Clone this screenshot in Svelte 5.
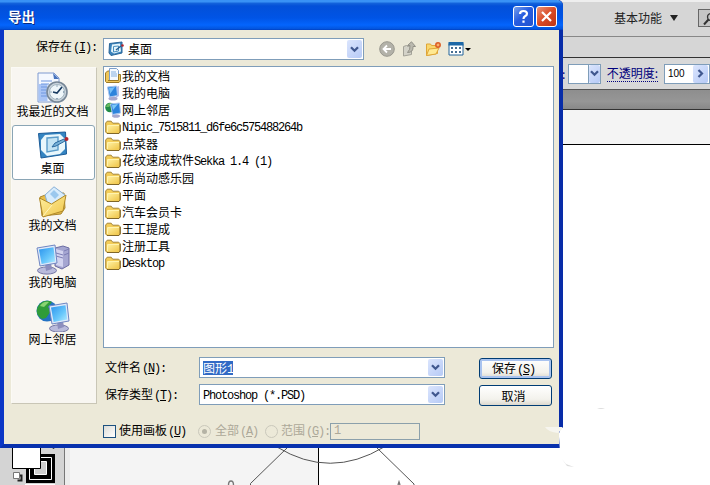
<script lang="ts">
	const places = [
		{ label: '我最近的文档', icon: 'recent' },
		{ label: '桌面', icon: 'desktop' },
		{ label: '我的文档', icon: 'documents' },
		{ label: '我的电脑', icon: 'computer' },
		{ label: '网上邻居', icon: 'network' }
	];

	const files = [
		{ name: '我的文档', icon: 'docs-small' },
		{ name: '我的电脑', icon: 'pc-small' },
		{ name: '网上邻居', icon: 'net-small' },
		{ name: 'Nipic_7515811_d6fe6c575488264b', icon: 'folder' },
		{ name: '点菜器', icon: 'folder' },
		{ name: '花纹速成软件Sekka 1.4 (1)', icon: 'folder' },
		{ name: '乐尚动感乐园', icon: 'folder' },
		{ name: '平面', icon: 'folder' },
		{ name: '汽车会员卡', icon: 'folder' },
		{ name: '王工提成', icon: 'folder' },
		{ name: '注册工具', icon: 'folder' },
		{ name: 'Desktop', icon: 'folder' }
	];

	let selected = $state('desktop');

	// latin runs get the half-width face, everything else stays full width
	function runs(text: string) {
		return text.split(/([\x20-\x7e]+)/).filter(Boolean);
	}

	function isLatin(run: string) {
		return /^[\x20-\x7e]/.test(run);
	}
</script>

{#snippet mixed(text: string)}
	{#each runs(text) as run}<span class:latin={isLatin(run)}>{run}</span>{/each}
{/snippet}

{#snippet hotkey(text: string, key: string, tail: string)}
	<span>{text}</span><span class="latin key">(<u>{key}</u>){tail}</span>
{/snippet}

{#snippet chevron()}
	<span class="drop">
		<svg width="9" height="7" viewBox="0 0 9 7"><path d="M1 1.2L4.5 4.7L8 1.2" fill="none" stroke="#40588f" stroke-width="2.3" /></svg>
	</span>
{/snippet}

{#snippet monitor()}
	<ellipse cx="11" cy="27.5" rx="9.5" ry="3.6" fill="#b9bbdc" stroke="#7375a5" />
	<path d="M9 21l6-1 1 6-6 2z" fill="#8c8ebd" />
	<path d="M1 5L19 2L21 20L4 23Z" fill="#dfe9fa" stroke="#6f86c2" />
	<path d="M3 6.5L17.5 4.2L19.2 18.6L5.6 21Z" fill="url(#screen)" />
{/snippet}

{#snippet icon(kind: string)}
	{#if kind === 'recent'}
		<svg width="32" height="32" viewBox="0 0 32 32">
			<path d="M1 1h16l5 5v24H1z" fill="#f4f8ff" stroke="#7f9ad0" />
			<path d="M1.5 12h9v17h-9z" fill="#a9c4f5" />
			<path d="M16 1l6 6h-5z" fill="#4773bd" />
			<path d="M4 9h11M4 12h8M4 15h6M4 18h5M4 21h5M4 24h7" stroke="#6e97df" />
			<circle cx="20" cy="20" r="10" fill="#c9d3dc" stroke="#778797" stroke-width="1.6" />
			<circle cx="20" cy="20" r="7.5" fill="#eef6fa" stroke="#a3b5c1" />
			<path d="M25 15l-5 6-4-1" fill="none" stroke="#173a61" stroke-width="1.6" />
			<path d="M20 13.5v1M20 26v1M13.5 20h1M26 20h1" stroke="#426381" />
		</svg>
	{:else if kind === 'desktop'}
		<svg width="32" height="32" viewBox="0 0 32 32">
			<path d="M1.500 4.500L28.500 3l1 22L4 29z" fill="#3585c2" stroke="#1c5c98" />
			<path d="M8 6l15-1 5 5v10l-5 5-13 2-6-6V11z" fill="#e9f7fc" />
			<path d="M10 9l11-1v13l-11 2z" fill="#c4e4f4" stroke="#5b9cc9" stroke-width="1.4" />
			<path d="M15 18l3-4 9-4 1 2-9 5z" fill="#78b2d8" stroke="#2c6a9f" />
			<circle cx="29.500" cy="10" r="2" fill="#b5242c" />
		</svg>
	{:else if kind === 'documents'}
		<svg width="32" height="32" viewBox="0 0 32 32">
			<path d="M3 11l8-3 16-1 1 15-4 6-19 2z" fill="#e9bd48" stroke="#a9862f" />
			<path d="M8 9L17 .8l11 8.200-5 11-12-1z" fill="#d8ecfc" stroke="#87afd6" />
			<path d="M13 8l4-4 5 5-4 4z" fill="#9bc8ee" />
			<path d="M2.500 12l12 6L29 9l-3 16-20 6z" fill="url(#folder)" stroke="#b18a2a" />
			<path d="M6 30l9-11" stroke="#fff6bd" />
		</svg>
	{:else if kind === 'computer'}
		<svg width="34" height="32" viewBox="0 0 34 32">
			<path d="M19 5l8-2 6 2v17l-7 4-7-3z" fill="#a5a6d1" stroke="#6c6da3" />
			<path d="M20 6l7 2v16l-7-2z" fill="#d2d3ef" />
			<path d="M20 10l7 2M20 13l7 2M28 8l5-2M28 12l5-2" stroke="#7c7db5" />
			{@render monitor()}
		</svg>
	{:else if kind === 'network'}
		<svg width="34" height="32" viewBox="0 0 34 32">
			<circle cx="11" cy="11" r="10.5" fill="#2372c4" />
			<path d="M1 9C3 2 10-1 16 2l-4 5 3 4-5 7-4 1C2 17 0 13 1 9z" fill="#2f9c3a" />
			<path d="M4 6c2-4 6-5 9-4l-5 5z" fill="#89d472" />
			<g transform="translate(12 1)">{@render monitor()}</g>
		</svg>
	{:else if kind === 'desk-small'}
		<svg width="16" height="16" viewBox="0 0 16 16">
			<path d="M1.500 2.500L14 1v11L3 14.500 1 12z" fill="#3a83bd" stroke="#2a6597" />
			<path d="M4 3.500l8-1 1 8-7 2-3-2z" fill="#e6f5fb" />
			<path d="M5.500 5.500l5-.5v5l-5 1z" fill="none" stroke="#4a8fbf" />
			<path d="M8 9l5-4" stroke="#245d90" stroke-width="1.500" />
			<circle cx="14.500" cy="4.500" r="1.300" fill="#b5242c" />
		</svg>
	{:else if kind === 'docs-small'}
		<svg width="16" height="16" viewBox="0 0 16 16">
			<path d="M.5 5l2-2h3v11.500h-4l-1-1z" fill="#eec65a" stroke="#9c7a28" />
			<path d="M4.500.5h7l2 2v10h-9z" fill="#f5faff" stroke="#7c9fca" />
			<path d="M6 4h5M6 6h6M6 8h6" stroke="#83afe0" />
			<path d="M1.500 14.500h12.500l1.500-1.500V6.500h-2v6H3" fill="#eec65a" stroke="#9c7a28" />
		</svg>
	{:else if kind === 'pc-small'}
		<svg width="16" height="16" viewBox="0 0 16 16">
			<ellipse cx="8" cy="13.500" rx="4.500" ry="2" fill="#a6a8ce" />
			<path d="M11 2l3-1v10l-3 2z" fill="#b8c0e8" />
			<path d="M2.500 2l9-1 1 9.500-8 1.500z" fill="#2d84dc" stroke="#a9c5ef" />
			<path d="M4 3l6-1-5 7z" fill="#76bff6" />
		</svg>
	{:else if kind === 'net-small'}
		<svg width="16" height="16" viewBox="0 0 16 16">
			<circle cx="5" cy="5.500" r="4.800" fill="#218b46" />
			<path d="M1 5c1-4 4-4 6-4L4 5z" fill="#69bb60" />
			<ellipse cx="11" cy="14" rx="4" ry="1.800" fill="#a6a8ce" />
			<path d="M5.500 2l9-1 1 10-8 1.500z" fill="#2d84dc" stroke="#a9c5ef" />
			<path d="M7 3l6-1-5 6z" fill="#7dc8f8" />
		</svg>
	{:else}
		<svg width="16" height="16" viewBox="0 0 16 16">
			<path d="M.7 4l1.500-1.800h4l1.500 2h6l1.300 1.300v7.500l-1.500 1.500H2L.7 13z" fill="#f3cd59" stroke="#a58637" />
			<path d="M3 6.500h11v7H3z" fill="url(#folder)" />
			<path d="M2.500 13V6.500H14" fill="none" stroke="#fff3ae" />
			<path d="M2 14.500h12l1.300-1.500V6" fill="none" stroke="#806729" />
		</svg>
	{/if}
{/snippet}

<div class="screen">
	<svg class="defs" width="0" height="0">
		<defs>
			<linearGradient id="screen" x1="0" y1="0" x2="1" y2="1">
				<stop offset="0" stop-color="#2a93ed" />
				<stop offset="0.6" stop-color="#69c8fb" />
				<stop offset="1" stop-color="#b8ecff" />
			</linearGradient>
			<linearGradient id="folder" x1="0" y1="0" x2="1" y2="1">
				<stop offset="0" stop-color="#fff0a0" />
				<stop offset="1" stop-color="#efc54a" />
			</linearGradient>
		</defs>
	</svg>

	<div class="editor">
		<div class="app-bar">
			<i class="sep"></i>
			<span class="workspace">基本功能</span>
			<svg class="tri" width="8" height="6"><path d="M0 0h8L4 6z" fill="#222" /></svg>
			<i class="sep"></i>
			<span class="search">
				<svg width="14" height="14" viewBox="0 0 14 14"><circle cx="8" cy="5" r="3.500" fill="none" stroke="#333" stroke-width="1.300" /><path d="M5.500 7.500L1 12.500" stroke="#333" stroke-width="2" /></svg>
			</span>
		</div>
		<div class="spacer-bar"></div>
		<div class="control-bar">
			<b>:</b>
			<span class="swatch"><span></span>{@render chevron()}</span>
			<span class="opacity">不透明度:</span>
			<span class="amount">
				<span>100</span>
				<span class="drop"><svg width="7" height="9" viewBox="0 0 7 9"><path d="M1.500 1L5 4.500L1.500 8" fill="none" stroke="#40588f" stroke-width="2.200" /></svg></span>
			</span>
		</div>
		<div class="tab-bar"></div>
		<div class="pasteboard"></div>
		<div class="canvas">
			<div class="toolbox">
				<svg width="60" height="38" viewBox="5 447 60 38">
					<path d="M27 454h29v29H27z" fill="#000" />
					<path d="M30.500 457.500h22v22h-22z" fill="none" stroke="#fff" />
					<path d="M35.500 461.500h12v13h-12z" fill="#cfcfcf" stroke="#fff" />
					<path d="M13.500 440h28v28.500h-28z" fill="#fff" stroke="#000" />
					<path d="M52 447h5l-2.500 2z" fill="#222" />
					<path d="M18.500 480.500h4v-5h-2" fill="none" stroke="#222" stroke-width="2" />
					<path d="M14.500 472.500h6v6h-6z" fill="#fff" stroke="#777" />
					<path d="M26 484h30v1H26z" fill="#fff" />
				</svg>
			</div>
			<svg class="art" width="645" height="38" viewBox="65 447 645 38">
				<path d="M65 447h5v38h-5z" fill="#ececec" />
				<path d="M70 447h248v38H70z" fill="#f4f4f4" />
				<path d="M318.500 447v38" stroke="#000" />
				<path d="M277 447Q330 479.500 384 447M288 447L250.500 483.500V485M376 447l38 37v1" fill="none" stroke="#555" />
				<path d="M228.500 485q0-4 2.500-4t2.500 4M398 485l1-3 1 3" fill="none" stroke="#777" stroke-width="1.400" />
			</svg>
		</div>
	</div>

	<div class="dialog">
		<div class="title-bar">
			<h1>导出</h1>
			<button class="caption" aria-label="?"><svg width="19" height="19" viewBox="0 0 19 19"><path d="M6 7q0-3 3.500-3t3.500 2.700q0 1.500-2 2.600-1.500.8-1.500 2.700M9.500 13.500v2.300" fill="none" stroke="#fff" stroke-width="2.200" /></svg></button>
			<button class="caption close" aria-label="×"><svg width="19" height="19" viewBox="0 0 19 19"><path d="M5 5l9 9M14 5l-9 9" stroke="#fff" stroke-width="2.200" /></svg></button>
		</div>

		<div class="body">
			<div class="look-in">
				<label for="look">{@render hotkey('保存在', 'I', ':')}</label>
				<div class="combo" id="look">
					{@render icon('desk-small')}
					<span class="value">桌面</span>
					{@render chevron()}
				</div>
				<div class="tools">
					<svg width="16" height="16" viewBox="0 0 16 16"><circle cx="8" cy="8" r="7.300" fill="#b3b2a9" stroke="#98978e" /><path d="M12 8H5M8 4.500L4.500 8 8 11.500" fill="none" stroke="#fff" stroke-width="1.800" /></svg>
					<svg width="16" height="16" viewBox="0 0 16 16"><path d="M1.500 5.500l3-1 1 1 4-1v9l-8 1.500z" fill="#d3d2c8" stroke="#a3a298" /><path d="M5.500 11.500q6 0 5.500-6h2.500L9.500.8 5.500 4.500h2.500q.5 4-2.500 7z" fill="#bab9af" stroke="#929188" /></svg>
					<svg width="16" height="16" viewBox="0 0 16 16"><path d="M1.500 3h4l1 1.500h6v8l-11 2z" fill="#f9d76d" stroke="#dfa537" /><path d="M4 8l10-1-3 6-9.500 1.500z" fill="#ffe992" stroke="#dfa537" /><circle cx="13" cy="4" r="2.200" fill="#f8b06a" stroke="#dc5d25" stroke-width="1.500" /></svg>
					<svg width="24" height="16" viewBox="0 0 24 16"><path d="M1 2.500h14v11.500H1z" fill="#fff" stroke="#23649b" /><path d="M.5 1h15v3.500H.5z" fill="#1d68a7" /><path d="M3 7h2M7 7h2M11 7h2M3 11h2M7 11h2M11 11h2" stroke="#476f93" stroke-width="2" /><path d="M17 7h6l-3 3z" fill="#000" /></svg>
				</div>
			</div>

			<div class="middle">
				<nav class="places">
					{#each places as place}
						<button class="place" class:active={selected === place.icon} onclick={() => (selected = place.icon)}>
							{@render icon(place.icon)}
							<span>{place.label}</span>
						</button>
					{/each}
				</nav>

				<div class="main">
					<ul class="files">
						{#each files as file}
							<li>
								{@render icon(file.icon)}
								<span class="name">{@render mixed(file.name)}</span>
							</li>
						{/each}
					</ul>

					<div class="form">
						<div class="fields">
							<div class="field">
								<span class="field-label">{@render hotkey('文件名', 'N', ':')}</span>
								<div class="combo"><span class="value"><mark>{@render mixed('图形1')}</mark></span>{@render chevron()}</div>
							</div>
							<div class="field">
								<span class="field-label">{@render hotkey('保存类型', 'T', ':')}</span>
								<div class="combo type"><span class="value">{@render mixed('Photoshop (*.PSD)')}</span>{@render chevron()}</div>
							</div>
						</div>
						<div class="actions">
							<button class="push primary">{@render hotkey('保存', 'S', '')}</button>
							<button class="push">取消</button>
						</div>
					</div>

					<div class="options">
						<i class="check"></i>
						<span class="artboard">{@render hotkey('使用画板', 'U', '')}</span>
						<i class="radio on"></i>
						<span class="off all">{@render hotkey('全部', 'A', '')}</span>
						<i class="radio"></i>
						<span class="off range">{@render hotkey('范围', 'G', ':')}</span>
						<span class="off pages latin">1</span>
					</div>
				</div>
			</div>
		</div>
	</div>

	<svg class="smudge" width="151" height="80" viewBox="559 405 151 80">
		<path d="M710 405H600l-37 22q-5 4-4 10l1 15v33h150z" fill="#fff" />
		<path d="M597 409q4-2 8 0zM562 459l5 7 7 1-8-3z" fill="#ddd" />
	</svg>
	<svg class="fleck" width="17" height="8"><path d="M0 0h17v2l-4 4Q3 5 0 0z" fill="#f6f5ef" /></svg>
</div>

<style>
	:global(body) {
		margin: 0;
		overflow: hidden;
	}

	.screen {
		position: relative;
		width: 710px;
		height: 485px;
		overflow: hidden;
		background: #fff;
		color: #000;
		font: 12px/16px 'Noto Sans CJK SC', sans-serif;
	}

	.screen :global(*) {
		box-sizing: border-box;
	}

	svg {
		display: block;
		flex-shrink: 0;
	}

	.defs {
		position: absolute;
	}

	button {
		padding: 0;
		border: 0;
		background: none;
		color: inherit;
		font: inherit;
	}

	.latin {
		font-family: 'Liberation Mono', monospace;
		font-size: 12px;
		letter-spacing: -1.2px;
		white-space: pre;
	}

	.key {
		margin-left: 1px;
	}

	u {
		text-underline-offset: 1px;
	}

	/* editor behind the dialog */
	.editor {
		display: flex;
		flex-direction: column;
		height: 485px;
	}

	.app-bar,
	.control-bar {
		display: flex;
		align-items: center;
		padding-left: 562px;
		flex-shrink: 0;
	}

	.app-bar {
		height: 37px;
		border-top: 2px solid #eee;
		border-bottom: 1px solid #888;
		background: #d6d6d6;
	}

	.app-bar > * {
		margin-bottom: 2px;
	}

	.sep {
		width: 1px;
		height: 20px;
		margin-left: 39px;
		background: #777;
	}

	.tri + .sep {
		margin-left: 10px;
	}

	.workspace {
		margin-left: 13px;
		color: #222;
		white-space: nowrap;
	}

	.tri {
		margin-left: 8px;
	}

	.search {
		width: 22px;
		height: 18px;
		margin-left: 10px;
		padding: 2px 4px;
		flex-shrink: 0;
		border: 1px solid #666;
		background: #c5c5c5;
	}

	.spacer-bar {
		height: 21px;
		flex-shrink: 0;
		border-bottom: 1px solid #333;
		background: #d6d6d6;
	}

	.control-bar {
		height: 32px;
		border-bottom: 1px solid #555;
		background: #d8d8d8;
		color: #00007c;
	}

	.control-bar b {
		width: 8px;
		font-weight: 400;
	}

	.swatch,
	.amount {
		display: flex;
		align-items: center;
		justify-content: space-between;
		flex-shrink: 0;
		height: 20px;
		border: 1px solid #7f9db9;
		background: #fff;
	}

	.swatch {
		width: 33px;
	}

	.swatch > span:first-child {
		width: 20px;
		height: 18px;
		border-right: 1px solid #7f9db9;
	}

	.swatch .drop {
		width: 11px;
		margin: 0;
	}

	.opacity {
		margin-left: 6px;
		height: 16px;
		border-bottom: 1px dotted #00007c;
		line-height: 14px;
		white-space: nowrap;
	}

	.amount {
		width: 46px;
		margin-left: 6px;
		padding-left: 3px;
		color: #000;
		font: 10px 'Liberation Sans', sans-serif;
	}

	.tab-bar {
		height: 20px;
		flex-shrink: 0;
		border-bottom: 1px solid #333;
		background: linear-gradient(#8e8e8e, #969696 60%, #888);
	}

	.pasteboard {
		height: 35px;
		flex-shrink: 0;
		border-bottom: 1px solid #000;
		background: #f4f4f4;
	}

	.canvas {
		display: flex;
		align-items: flex-end;
		flex: 1;
	}

	.toolbox {
		width: 65px;
		padding-left: 4px;
		flex-shrink: 0;
		border-right: 1px solid #777;
		background: #d4d4d4;
	}

	/* export dialog */
	.dialog {
		position: absolute;
		left: 0;
		top: 0;
		width: 563px;
		height: 448px;
		border: solid #0b37c6;
		border-width: 0 4px 4px;
		border-right-color: #082ca8;
		border-bottom-color: #0831ad;
		border-radius: 0 5px 0 0;
		background: #ece9d8;
	}

	.title-bar {
		display: flex;
		align-items: center;
		gap: 2px;
		height: 30px;
		margin: 0 -4px;
		padding: 3px 6px 0 8px;
		border-radius: 0 6px 0 0;
		background: linear-gradient(#3992f5 0 2px, #1565dc 3px, #0350d8 6px, #0054e6 18px, #0465fd 25px, #0354dc 29px, #003bbb);
	}

	h1 {
		flex: 1;
		margin: -2px 0 0;
		color: #fff;
		font-size: 13.5px;
		font-weight: 700;
		text-shadow: 1px 1px #0a2a80;
	}

	.caption {
		width: 21px;
		height: 21px;
		border: 1px solid #fff;
		border-radius: 3px;
		background: linear-gradient(135deg, #779fea, #275de0 45%, #2253cf);
	}

	.close {
		background: linear-gradient(135deg, #e99378, #d94a25 50%, #bd3516);
	}

	.body {
		padding: 8px 5px 0 7px;
	}

	.look-in {
		display: flex;
		height: 22px;
	}

	.look-in label {
		width: 92px;
		padding-left: 25px;
		line-height: 16px;
		white-space: nowrap;
	}

	.combo {
		display: flex;
		align-items: center;
		width: 261px;
		height: 22px;
		padding-left: 4px;
		border: 1px solid #7f9db9;
		background: #fff;
	}

	.value {
		flex: 1;
		white-space: nowrap;
	}

	.look-in .value {
		padding: 0 0 1px 4px;
	}

	.drop {
		display: flex;
		align-items: center;
		justify-content: center;
		width: 15px;
		height: 18px;
		margin-right: 1px;
		border-radius: 2px;
		background: linear-gradient(135deg, #dbe5fd, #b6caf6);
	}

	.tools {
		display: flex;
		gap: 7px;
		padding: 3px 0 0 15px;
	}

	.middle {
		display: flex;
		gap: 6px;
		margin-top: 6px;
	}

	.places {
		display: flex;
		flex-direction: column;
		width: 86px;
		height: 337px;
		margin-top: 1px;
		border: 1px solid;
		border-color: #fbfaf5 #c9c6b6 #c9c6b6 #fbfaf5;
		background: #f8f6f1;
	}

	.place {
		display: flex;
		flex-direction: column;
		align-items: center;
		width: 83px;
		height: 55px;
		margin-bottom: 2px;
		padding: 3px 2px 0 0;
		border: 1px solid transparent;
		border-radius: 3px;
		white-space: nowrap;
	}

	.place span {
		margin-top: -2px;
		line-height: 18px;
	}

	.place.active {
		border-color: #8aa5b5;
		background: #fff;
	}

	.main {
		width: 451px;
	}

	.files {
		height: 282px;
		margin: 0;
		padding: 0 1px;
		border: 1px solid #7f9db9;
		background: #fff;
		list-style: none;
	}

	.files li {
		display: flex;
		align-items: center;
		height: 17px;
		line-height: 17px;
		white-space: nowrap;
	}

	.name {
		padding-left: 1px;
	}

	.form {
		display: flex;
		justify-content: space-between;
		padding: 9px 2px 0 1px;
	}

	.fields,
	.actions {
		display: flex;
		flex-direction: column;
		gap: 6px;
	}

	.field {
		display: flex;
		align-items: center;
	}

	.field-label {
		width: 95px;
		padding-left: 1px;
		white-space: nowrap;
	}

	.field .combo {
		width: 246px;
		height: 21px;
		padding-left: 3px;
	}

	.field .drop {
		height: 17px;
	}

	mark {
		display: inline-block;
		height: 14px;
		background: #316ac5;
		color: #fff;
		line-height: 13px;
	}

	.actions {
		padding-top: 1px;
	}

	.push {
		width: 73px;
		height: 21px;
		padding-right: 4px;
		border: 1px solid #003c74;
		border-radius: 3px;
		background: linear-gradient(#fff, #f3f2ec 70%, #dcd8ce);
		line-height: 16px;
	}

	.primary {
		box-shadow: inset 0 0 0 2px #a9c3ef;
	}

	.options {
		display: flex;
		align-items: center;
		height: 18px;
		margin-top: 16px;
		white-space: nowrap;
	}

	.check {
		width: 13px;
		height: 13px;
		border: 1px solid #1c5180;
		background: linear-gradient(135deg, #dcdcd7, #fff);
	}

	.artboard {
		width: 79px;
		margin-left: 3px;
	}

	.radio {
		display: flex;
		align-items: center;
		justify-content: center;
		width: 13px;
		height: 13px;
		border: 1px solid #cac8bb;
		border-radius: 50%;
	}

	.radio.on::after {
		content: '';
		width: 5px;
		height: 5px;
		border-radius: 50%;
		background: #b5b3a5;
	}

	.off {
		color: #aca899;
	}

	.all {
		width: 50px;
		margin-left: 4px;
	}

	.range {
		width: 49px;
		margin-left: 3px;
	}

	.pages {
		width: 90px;
		height: 17px;
		padding-left: 3px;
		border: 1px solid #8ba0ab;
		line-height: 15px;
	}

	.smudge {
		position: absolute;
		right: 0;
		bottom: 0;
	}

	.fleck {
		position: absolute;
		left: 545px;
		top: 427px;
	}
</style>
